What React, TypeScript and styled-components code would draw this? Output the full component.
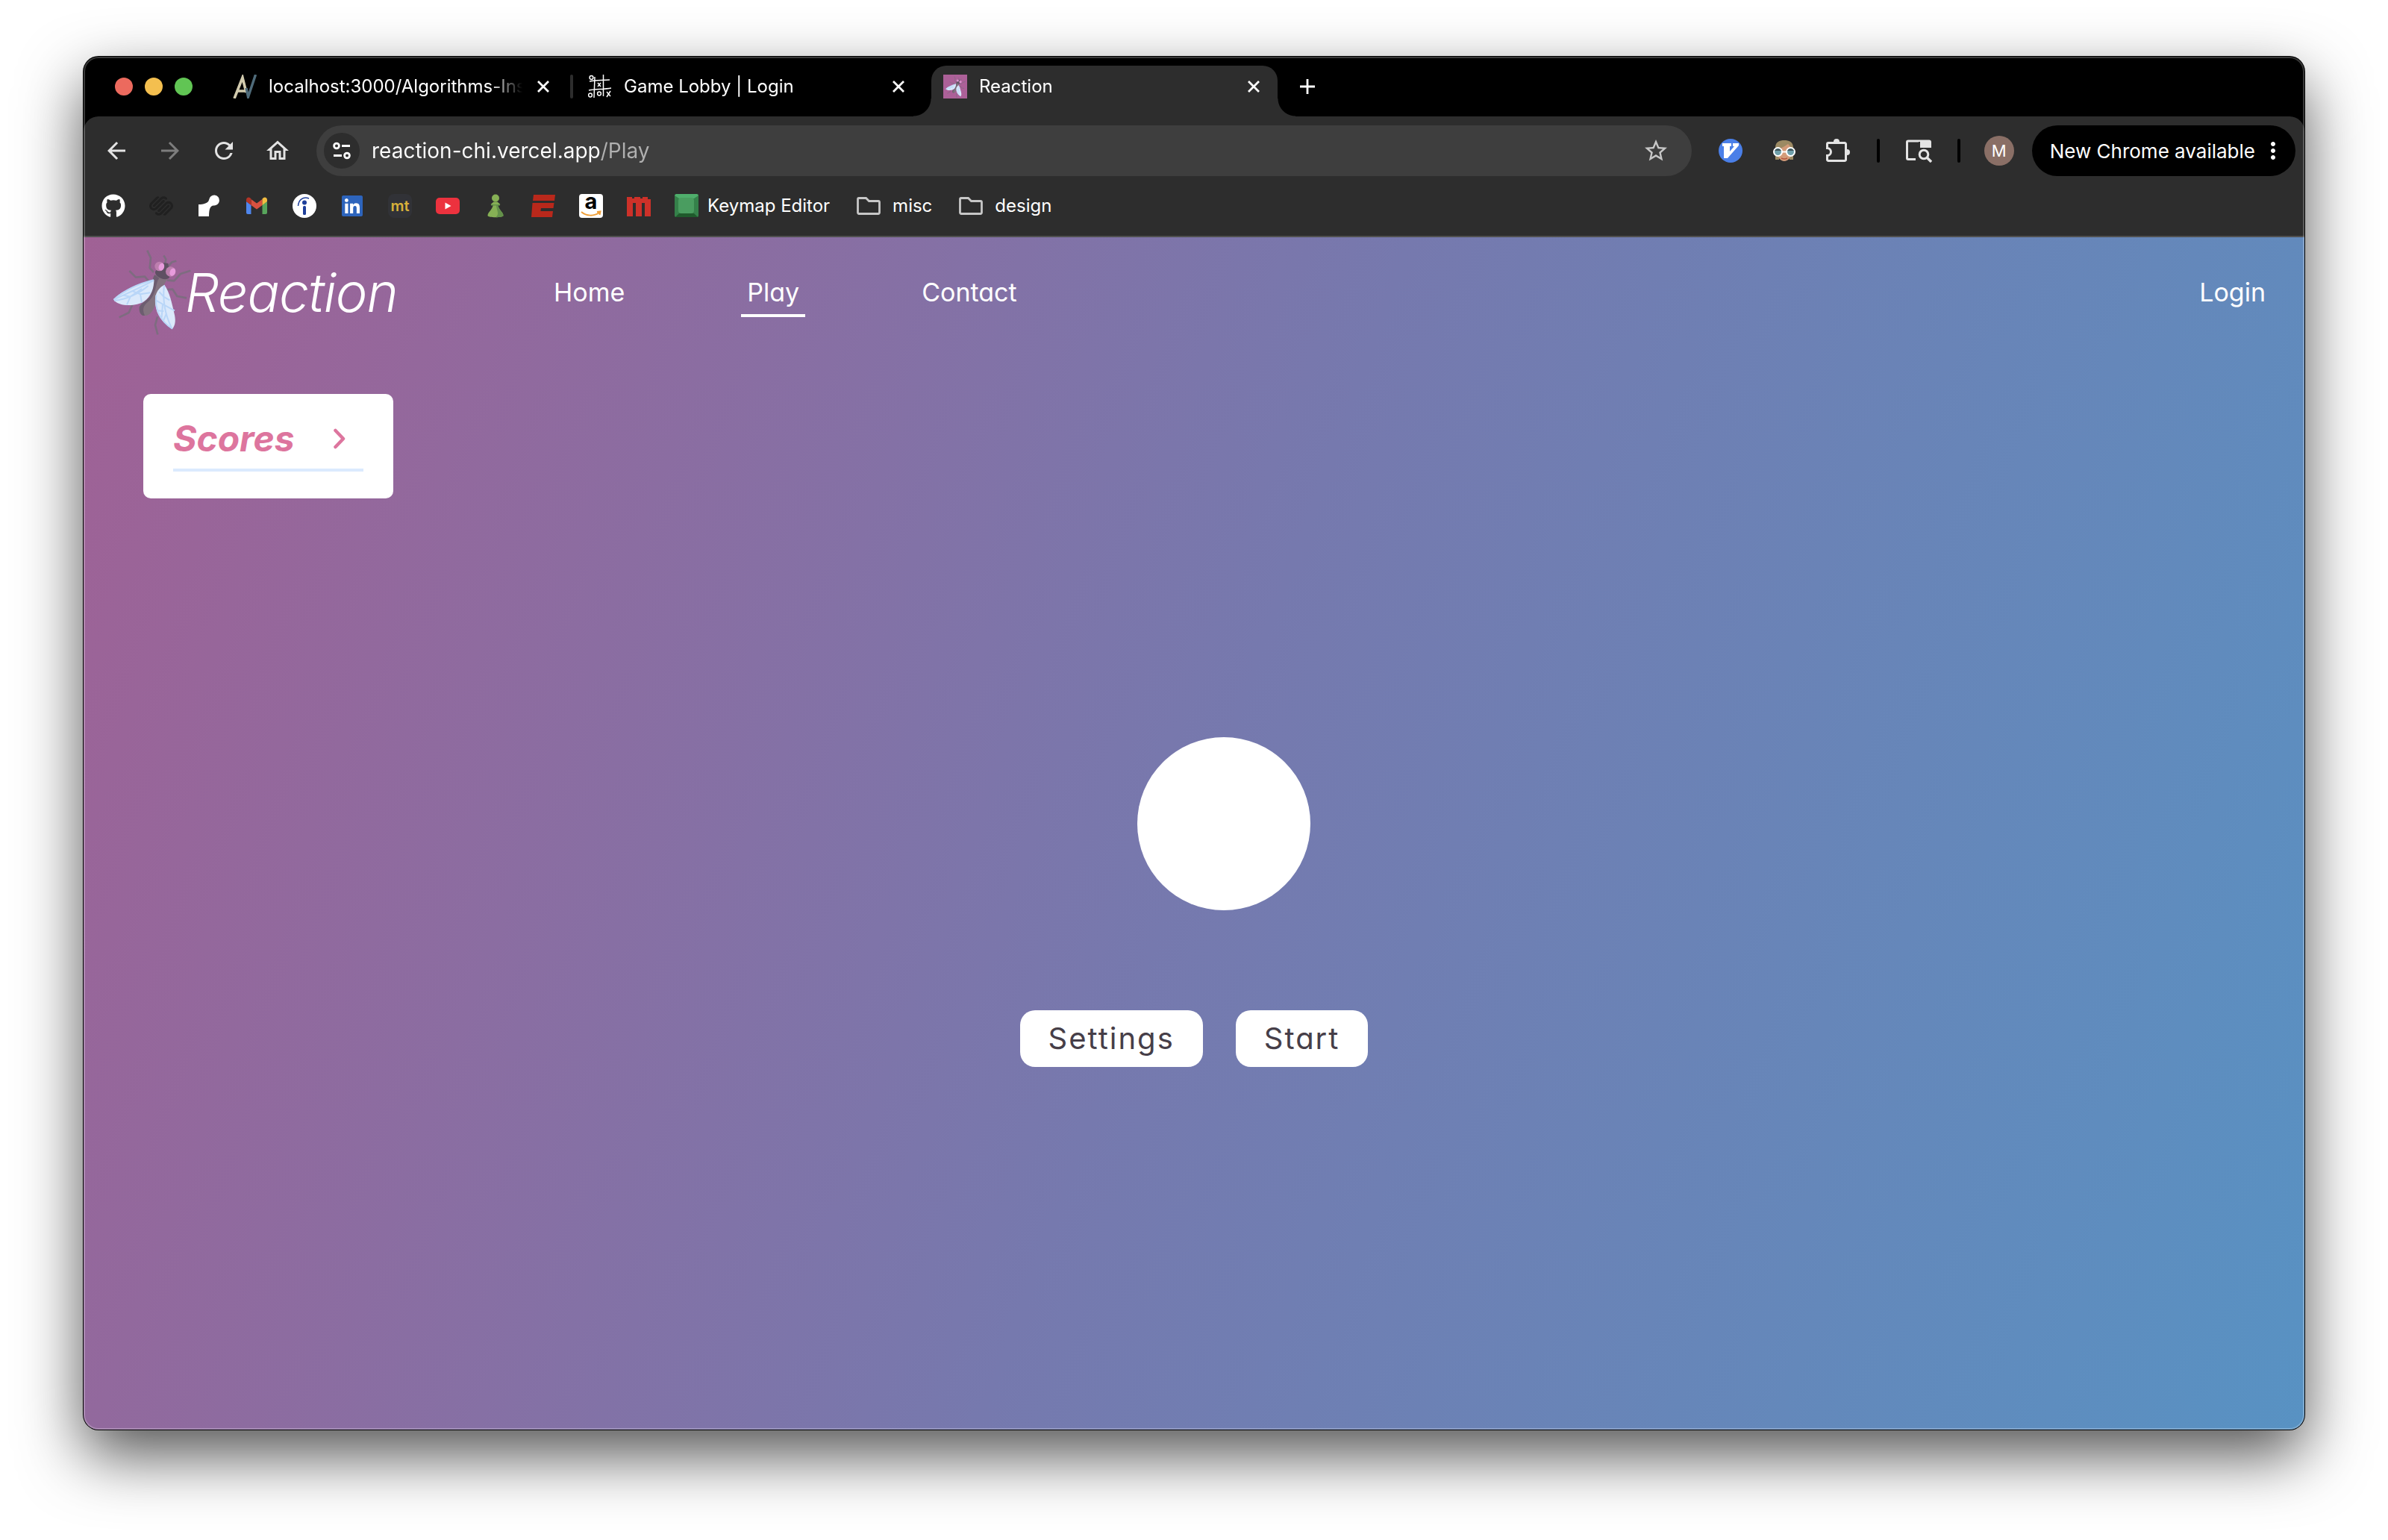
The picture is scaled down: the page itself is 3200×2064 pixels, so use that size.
import React from "react";
import styled, { createGlobalStyle, css } from "styled-components";
import { FaGithub, FaSquarespace, FaLinkedin } from "react-icons/fa";
import {
  MdArrowBack,
  MdArrowForward,
  MdRefresh,
  MdOutlineHome,
  MdStarBorder,
  MdMoreVert,
} from "react-icons/md";

const GlobalStyle = createGlobalStyle`
  *, *::before, *::after { box-sizing: border-box; }
  body {
    margin: 0;
    background: #fff;
    font-family: Inter, "Liberation Sans", sans-serif;
    -webkit-font-smoothing: antialiased;
  }
  button, input { font: inherit; color: inherit; border: 0; padding: 0; background: none; }
  button { cursor: pointer; }
  h1, h2, p, ul { margin: 0; padding: 0; }
  ul { list-style: none; }
  a { color: inherit; text-decoration: none; }
  svg { display: block; flex: none; }
`;

/* ---------- desktop and window ---------- */

const Desktop = styled.div`
  min-height: 100vh;
  padding: 76px 112px 148px;
  display: flex;
`;

const BrowserWindow = styled.div`
  position: relative;
  flex: 1;
  min-width: 0;
  display: flex;
  flex-direction: column;
  overflow: hidden;
  border-radius: 20px;
  background: #000;
  color: #fff;
  box-shadow: 0 0 0 1px #000, 0 34px 84px rgba(0, 0, 0, 0.68);

  &::after {
    content: "";
    position: absolute;
    inset: 0;
    border: 2px solid rgba(255, 255, 255, 0.22);
    border-radius: 20px;
    pointer-events: none;
  }
`;

/* ---------- tab strip ---------- */

const TabStrip = styled.div`
  display: flex;
  align-items: center;
  height: 80px;
  padding-left: 42px;
`;

const TrafficLights = styled.div`
  display: flex;
  gap: 16px;
  margin-right: 38px;
`;

const Light = styled.button<{ $color: string }>`
  width: 24px;
  height: 24px;
  border-radius: 50%;
  background: ${(p) => p.$color};
`;

const Tab = styled.div<{ $active?: boolean }>`
  position: relative;
  display: flex;
  align-items: center;
  align-self: flex-end;
  gap: 16px;
  width: 464px;
  height: 68px;
  padding: 0 16px 12px;
  ${(p) =>
    p.$active &&
    css`
      margin-left: 12px;
      background: #2d2d2d;
      border-radius: 20px 20px 0 0;

      &::before,
      &::after {
        content: "";
        position: absolute;
        bottom: 0;
        width: 24px;
        height: 24px;
      }
      &::before {
        right: 100%;
        background: radial-gradient(circle at 0 0, transparent 23px, #2d2d2d 24px);
      }
      &::after {
        left: 100%;
        background: radial-gradient(circle at 100% 0, transparent 23px, #2d2d2d 24px);
      }
    `}
`;

const TabTitle = styled.span`
  flex: 1;
  min-width: 0;
  margin-right: -12px;
  white-space: nowrap;
  font-size: 24px;
  line-height: 32px;
  mask-image: linear-gradient(90deg, #000 calc(100% - 52px), transparent calc(100% - 8px));
`;

const TabDivider = styled.span`
  width: 4px;
  height: 32px;
  margin: 0 4px;
  border-radius: 2px;
  background: #2d2d2d;
`;

const StripButton = styled.button`
  display: grid;
  place-items: center;
  width: 32px;
  height: 32px;
`;

const NewTabButton = styled(StripButton)`
  margin-left: 24px;
`;

/* ---------- toolbar ---------- */

const Chrome = styled.div`
  background: #2d2d2d;
  border-radius: 20px 20px 0 0;
  border-bottom: 2px solid #505050;
`;

const Toolbar = styled.div`
  display: flex;
  align-items: center;
  gap: 32px;
  padding: 12px 12px 12px 24px;
`;

const ToolButton = styled.button<{ $dim?: boolean }>`
  display: grid;
  place-items: center;
  flex: none;
  width: 40px;
  height: 40px;
  font-size: 36px;
  color: ${(p) => (p.$dim ? "#7d7d7d" : "#e3e3e3")};
`;

const AddressBar = styled.form`
  flex: 1;
  min-width: 0;
  display: flex;
  align-items: center;
  gap: 16px;
  height: 68px;
  padding: 0 28px 0 10px;
  border-radius: 34px;
  background: #3e3e3e;
`;

const SiteInfo = styled.button`
  display: grid;
  place-items: center;
  flex: none;
  width: 48px;
  height: 48px;
  border-radius: 50%;
  background: #2d2d2d;
`;

const AddressInput = styled.input`
  flex: 1;
  min-width: 0;
  height: 40px;
  font-size: 28px;
  outline: none;
  color: #fff;
  background: linear-gradient(90deg, #fff 308px, #b0b0b0 308px);
  background-clip: text;
  -webkit-background-clip: text;
  -webkit-text-fill-color: transparent;
`;

const ToolDivider = styled.span`
  flex: none;
  width: 4px;
  height: 32px;
  border-radius: 2px;
  background: #000;
`;

const Profile = styled.div`
  display: flex;
  align-items: center;
  gap: 24px;
`;

const Avatar = styled.button`
  width: 40px;
  height: 40px;
  border-radius: 50%;
  background: #8a6f66;
  font-size: 22px;
  line-height: 40px;
`;

const UpdateChip = styled.button`
  display: flex;
  align-items: center;
  gap: 6px;
  height: 68px;
  padding: 0 12px 0 24px;
  border-radius: 34px;
  background: #000;
  font-size: 26px;
  white-space: nowrap;
`;

/* ---------- bookmarks ---------- */

const Bookmarks = styled.nav`
  display: flex;
  align-items: center;
  gap: 32px;
  height: 68px;
  padding: 0 24px 12px;
`;

const Bookmark = styled.a`
  display: flex;
  align-items: center;
  gap: 12px;
  font-size: 24px;
  line-height: 32px;
  white-space: nowrap;
`;

const Folder = styled(Bookmark)`
  gap: 16px;
  margin-left: 4px;
`;

const Tile = styled.span<{ $bg: string; $fg: string }>`
  display: grid;
  place-items: center;
  width: 32px;
  height: 32px;
  border-radius: 8px;
  background: ${(p) => p.$bg};
  color: ${(p) => p.$fg};
  font-size: 20px;
  font-weight: 600;
  line-height: 24px;
`;

/* ---------- page ---------- */

const Page = styled.div`
  flex: 1;
  display: flex;
  flex-direction: column;
  background: linear-gradient(110deg, #a06195 0%, #7679ae 50%, #5892c3 100%);
  font-feature-settings: "cv11", "ss03";
`;

const SiteHeader = styled.header`
  display: flex;
  align-items: center;
  justify-content: space-between;
  height: 148px;
  padding: 0 44px 0 40px;
`;

const HeaderStart = styled.div`
  display: flex;
  align-items: center;
  gap: 144px;
`;

const Brand = styled.a`
  display: flex;
  align-items: center;
  width: 438px;
`;

const BrandName = styled.span`
  margin-left: -8px;
  font-size: 72px;
  font-style: italic;
  font-weight: 300;
  line-height: 80px;
  letter-spacing: -1px;
`;

const Links = styled.nav`
  display: flex;
  gap: 148px;
`;

const PageLink = styled.a<{ $current?: boolean }>`
  display: flex;
  align-items: center;
  height: 66px;
  padding: 0 8px;
  border: solid transparent;
  border-width: 4px 0;
  border-bottom-color: ${(p) => (p.$current ? "#fff" : "transparent")};
  font-size: 34px;
  line-height: 40px;
`;

const Main = styled.main`
  flex: 1;
  padding: 62px 80px 80px;
`;

const ScoresCard = styled.section`
  width: fit-content;
  padding: 20px 40px 36px;
  border-radius: 10px;
  background: #fff;
  color: #dd759e;
`;

const ScoresToggle = styled.button`
  display: flex;
  align-items: center;
  justify-content: space-between;
  gap: 44px;
  min-width: 255px;
  height: 84px;
  padding-right: 24px;
  border-bottom: 4px solid #dbeafe;
  font-size: 48px;
  font-style: italic;
  font-weight: 700;
  line-height: 56px;
`;

const Stage = styled.section`
  display: flex;
  flex-direction: column;
  align-items: center;
  gap: 134px;
  padding-top: 320px;
`;

const Target = styled.button`
  width: 232px;
  height: 232px;
  margin-left: 80px;
  border-radius: 50%;
  background: #fff;
`;

const Actions = styled.div`
  display: flex;
  gap: 44px;
`;

const ActionButton = styled.button`
  height: 76px;
  padding: 0 38px;
  border-radius: 20px;
  background: #fff;
  color: #463e48;
  font-size: 40px;
  line-height: 48px;
  letter-spacing: 2px;
`;

/* ---------- drawings ---------- */

const CloseIcon = () => (
  <svg width="16" height="16" viewBox="0 0 16 16" stroke="#fff" strokeWidth="2.8" aria-hidden>
    <path d="M1 1 15 15M15 1 1 15" />
  </svg>
);

const AlgoIcon = () => (
  <svg width="32" height="32" viewBox="0 0 32 32" fill="none" aria-hidden>
    <path d="M2 32 13 4 18 24M7 22h12" stroke="#d2cbae" strokeWidth="3.6" />
    <path d="M18 18 20.5 30 30.5 0" stroke="#4f6b7a" strokeWidth="3.4" />
  </svg>
);

const TicTacIcon = () => (
  <svg width="32" height="32" viewBox="0 0 32 32" fill="none" stroke="#fff" strokeWidth="1.5" aria-hidden>
    <path d="M9 3 8 31M20.500 0v29M2 9c9-2 17-1 27-2M1 21c10-2 20-1 30-3" />
    <circle cx="4.500" cy="4" r="2.400" />
    <circle cx="3" cy="27.500" r="2.400" />
    <circle cx="15" cy="25.500" r="2.400" />
    <path d="M13 11l4 5M17 11l-4 5M25 23l5 6M30 22l-5 8" />
  </svg>
);

const FlyDrawing = () => (
  <>
    <g fill="none" stroke="#7e6c80" strokeWidth="8" strokeLinejoin="round">
      <path d="M156 20 170 50 166 90 182 108" />
      <path d="M84 102 110 128 146 125 162 144" />
      <path d="M222 40 231 55 228 72M273 62 255 67 240 84" />
      <path d="M236 140 264 142 290 114 330 101" />
      <path d="M236 177 258 176 276 204 314 211" />
      <path d="M98 234 82 270 43 289" />
      <path d="M197 286 188 320 198 358" />
    </g>
    <path d="M186 118C170 140 184 170 166 206C150 226 122 236 124 254C124 272 134 284 150 282C178 278 190 240 196 200L238 134Z" fill="#83737f" />
    <path d="M186 118C170 140 184 170 166 206C150 226 122 236 124 254C124 272 134 284 146 282C132 250 146 238 164 222C196 190 188 150 204 132Z" fill="#6d5d70" />
    <path d="M222 70l18 2 4 30-28 4z" fill="#5f5063" />
    <ellipse cx="217" cy="116" rx="31" ry="17" transform="rotate(22 217 116)" fill="#5f5063" />
    <circle cx="205" cy="84" r="19" fill="#bd7fae" />
    <ellipse cx="213" cy="86" rx="11" ry="15" transform="rotate(20 213 86)" fill="#e79bdc" />
    <circle cx="250" cy="105" r="20" fill="#bd7fae" />
    <ellipse cx="258" cy="107" rx="11" ry="16" transform="rotate(20 258 107)" fill="#e79bdc" />
    <path d="M183 138C120 154 40 188 21 218C38 246 112 246 142 226C172 206 184 168 183 138Z" fill="#dbe9fb" />
    <path d="M225 158C190 176 178 214 196 268C210 304 236 324 257 335C268 322 271 304 266 280C254 226 246 190 225 158Z" fill="#dbe9fb" />
    <g fill="none" stroke="#b9d6f8" strokeWidth="6">
      <path d="M22 218C66 196 130 170 182 140M24 222C70 216 120 196 160 162M74 238 88 206 60 200M134 230 128 196 98 184M88 206 134 174M128 196 168 190" />
      <path d="M224 160C218 210 224 270 254 332M190 220 218 236 266 262M196 262 222 264M218 236 214 290M204 186 222 206 246 220M232 276 220 304" />
      <path d="M21 218C60 184 120 154 182 139M192 200C186 250 204 300 257 335" />
    </g>
  </>
);

const FlyLogo = () => (
  <svg width="104" height="114" viewBox="20 18 312 342" aria-hidden>
    <FlyDrawing />
  </svg>
);

const FlyFavicon = () => (
  <svg width="32" height="32" viewBox="-20 -10 380 380" aria-hidden>
    <rect x="-20" y="-10" width="380" height="380" fill="#ac6098" />
    <FlyDrawing />
  </svg>
);

const TuneIcon = () => (
  <svg width="28" height="28" viewBox="0 0 28 28" fill="none" stroke="#fff" strokeWidth="2.8" aria-hidden>
    <circle cx="7" cy="7.500" r="3.400" />
    <path d="M14 7.500h11M3 20.500h11" />
    <circle cx="21" cy="20.500" r="3.400" />
  </svg>
);

const VimiumIcon = () => (
  <svg width="32" height="32" viewBox="0 0 32 32" aria-hidden>
    <circle cx="16" cy="16" r="16" fill="#4a7fe8" />
    <path d="M5 6h12v4h-2v7l6-7h-2V6h8v3L12 26H7V10H5z" fill="#fff" />
  </svg>
);

const FaceIcon = () => (
  <svg width="32" height="32" viewBox="0 0 32 32" aria-hidden>
    <path d="M4 28V12C4 4 10 2 16 2s12 2 12 10v16h-5V12H9v16z" fill="#9c8a63" />
    <path d="M6 14C12 13 17 10 21 7c2 2 5 5 5 9 0 9-5 14-10 14S6 25 6 14z" fill="#d39b79" />
    <circle cx="7.500" cy="17.500" r="5.500" fill="#6fa0ab" stroke="#fff" strokeWidth="2" />
    <circle cx="24.500" cy="17.500" r="5.500" fill="#6fa0ab" stroke="#fff" strokeWidth="2" />
    <path d="M3 16a5 5 0 0 1 9 0zM20 16a5 5 0 0 1 9 0z" fill="#3d5157" />
    <path d="M13 17.500h6" stroke="#fff" strokeWidth="2" />
    <path d="M12 26q4 2 8 0" stroke="#b5563f" strokeWidth="1.500" fill="none" />
  </svg>
);

const PuzzleIcon = () => (
  <svg width="32" height="32" viewBox="0 0 32 32" aria-hidden>
    <path
      d="M3 5.500h22a1.500 1.500 0 0 1 1.500 1.500v21a1.500 1.500 0 0 1-1.500 1.500H3A1.500 1.500 0 0 1 1.500 28v-5.500a5 5 0 0 0 0-10V7A1.500 1.500 0 0 1 3 5.500z"
      fill="none"
      stroke="#e3e3e3"
      strokeWidth="3"
    />
    <path d="M10 4a4 4 0 0 1 8 0zM28 14a4 4 0 0 1 0 8z" fill="#e3e3e3" />
  </svg>
);

const TabSearchIcon = () => (
  <svg width="36" height="32" viewBox="0 0 36 32" aria-hidden>
    <path d="M14 27.500H4A1.500 1.500 0 0 1 2.500 26V4.500A1.500 1.500 0 0 1 4 3h14" fill="none" stroke="#e3e3e3" strokeWidth="3" />
    <path d="M18 1.500h14a3 3 0 0 1 3 3V12H20V4h-2z" fill="#e3e3e3" />
    <circle cx="25" cy="21" r="5.800" fill="none" stroke="#e3e3e3" strokeWidth="3" />
    <path d="M29 25l6 6" stroke="#e3e3e3" strokeWidth="3.400" />
  </svg>
);

const BlobIcon = () => (
  <svg width="32" height="32" viewBox="0 0 32 32" aria-hidden>
    <path d="M2 14C9 14 15 12 16 8A7 7 0 1 1 22 15.400C18 16 16 19 16 30H2z" fill="#fff" />
  </svg>
);

const GmailIcon = () => (
  <svg width="32" height="32" viewBox="0 0 32 32" aria-hidden>
    <path d="M2 10v15a2 2 0 0 0 2 2h4.500V14.500z" fill="#4f86ec" />
    <path d="M23.500 27H28a2 2 0 0 0 2-2V10l-6.500 4.500z" fill="#58a55c" />
    <path d="M8.500 7 16 12.500 23.500 7v8L16 20.500 8.500 15z" fill="#d85140" />
    <path d="M2 8c0-3 3-4.500 5.500-2.500l1 1V15L2 10z" fill="#b33426" />
    <path d="M30 8c0-3-3-4.500-5.500-2.500l-1 1V15L30 10z" fill="#f2bd42" />
  </svg>
);

const IndeedIcon = () => (
  <svg width="32" height="32" viewBox="0 0 32 32" aria-hidden>
    <circle cx="16" cy="16" r="16" fill="#fff" />
    <circle cx="16" cy="11.500" r="3" fill="#1f3f9a" />
    <rect x="14" y="16" width="4" height="12" rx="1.500" fill="#1f3f9a" />
    <path d="M7.500 16C8 8 14 3 22 6" fill="none" stroke="#1f3f9a" strokeWidth="1.500" />
  </svg>
);

const LinkedInIcon = styled(FaLinkedin)`
  width: 32px;
  height: 32px;
  color: #2d64bc;
  background: linear-gradient(#fff, #fff) center / 20px 20px no-repeat;
`;

const YouTubeIcon = () => (
  <svg width="32" height="32" viewBox="0 0 32 32" aria-hidden>
    <rect y="5" width="32" height="22" rx="5" fill="#ec323e" />
    <path d="M12.500 11.500v9l8-4.500z" fill="#fff" />
  </svg>
);

const PawnIcon = () => (
  <svg width="32" height="32" viewBox="0 0 32 32" aria-hidden>
    <path d="M5.500 29c0-5 6-7 7.500-15H9.500l4-3.500h5l4 3.500H19c1.500 8 7.500 10 7.500 15 0 3-21 3-21 0z" fill="#86b055" />
    <path d="M17 14h2c1.500 8 7.500 10 7.500 15 0 1.500-5 2.200-10 2.200C22 26 17 22 17 14z" fill="#63904a" />
    <circle cx="16" cy="5.500" r="5" fill="#86b055" />
    <path d="M10 14h12v1.500H10z" fill="#63904a" />
  </svg>
);

const SlantedBarsIcon = () => (
  <svg width="32" height="32" viewBox="0 0 32 32" fill="#b9281b" aria-hidden>
    <path d="M3 1h29l-1 8H2zM1.500 12h29l-1 7H13l-.6 4H29l-1 8H0z" />
  </svg>
);

const SmileTile = styled(Tile)`
  position: relative;
  border-radius: 4px;
  font-size: 29px;
  font-weight: 700;
  line-height: 20px;
  align-items: start;

  svg {
    position: absolute;
    left: 0;
    top: 0;
  }
`;

const AmazonIcon = () => (
  <SmileTile $bg="#fff" $fg="#000">
    a
    <svg width="32" height="32" viewBox="0 0 32 32" fill="none" stroke="#ef9f38" strokeWidth="2" aria-hidden>
      <path d="M3 24c7 6 17 6 24 1M24 24l4.500-.5-1 4.500" />
    </svg>
  </SmileTile>
);

const BlockMIcon = () => (
  <svg width="32" height="32" viewBox="0 0 32 32" fill="#cd3129" aria-hidden>
    <path d="M0 4h7v2h3V4h8v2h3V4h7v3h4v23h-8V12h-4v18h-8V12H8v18H0z" />
  </svg>
);

const KeycapIcon = () => (
  <svg width="32" height="32" viewBox="0 0 32 32" aria-hidden>
    <rect width="32" height="31" rx="2" fill="#35814a" />
    <path d="M0 2l6 4h20l6-4-2-2H2z" fill="#4fae6c" />
    <path d="M1 31l5-5h20l5 5z" fill="#1f5a2c" />
    <rect x="5" y="5" width="21" height="21" rx="4" fill="#4a9d60" />
  </svg>
);

const FolderIcon = () => (
  <svg width="32" height="32" viewBox="0 0 32 32" fill="none" stroke="#c7c7c7" strokeWidth="2.800" aria-hidden>
    <path d="M1.500 25V7A1.500 1.500 0 0 1 3 5.500h9.500l4 4H29a1.500 1.500 0 0 1 1.500 1.500v14a1.500 1.500 0 0 1-1.500 1.500H3A1.500 1.500 0 0 1 1.500 25z" />
  </svg>
);

const ChevronIcon = () => (
  <svg width="16" height="28" viewBox="0 0 16 28" fill="none" stroke="#dd759e" strokeWidth="4.500" strokeLinecap="round" strokeLinejoin="round" aria-hidden>
    <path d="M2.500 3 13 14 2.500 25" />
  </svg>
);

/* ---------- data ---------- */

const tabs = [
  { title: "localhost:3000/Algorithms-Ins", icon: <AlgoIcon /> },
  { title: "Game Lobby | Login", icon: <TicTacIcon /> },
  { title: "Reaction", icon: <FlyFavicon />, active: true },
];

const siteBookmarks = [
  { name: "GitHub", icon: <FaGithub size={32} /> },
  { name: "Squarespace", icon: <FaSquarespace size={32} color="#202020" /> },
  { name: "Notes", icon: <BlobIcon /> },
  { name: "Gmail", icon: <GmailIcon /> },
  { name: "Indeed", icon: <IndeedIcon /> },
  { name: "LinkedIn", icon: <LinkedInIcon /> },
  { name: "Typing", icon: <Tile $bg="#313237" $fg="#d8b13a">mt</Tile> },
  { name: "YouTube", icon: <YouTubeIcon /> },
  { name: "Chess", icon: <PawnIcon /> },
  { name: "Editor", icon: <SlantedBarsIcon /> },
  { name: "Amazon", icon: <AmazonIcon /> },
  { name: "Menu", icon: <BlockMIcon /> },
];

const pages = ["Home", "Play", "Contact"];

export default function App() {
  return (
    <>
      <GlobalStyle />
      <Desktop>
        <BrowserWindow>
          <TabStrip>
            <TrafficLights>
              <Light $color="#ec6a5e" aria-label="Close window" />
              <Light $color="#f4bf4f" aria-label="Minimise window" />
              <Light $color="#61c554" aria-label="Zoom window" />
            </TrafficLights>
            {tabs.map((tab, i) => (
              <React.Fragment key={tab.title}>
                {i === 1 && <TabDivider />}
                <Tab $active={tab.active}>
                  {tab.icon}
                  <TabTitle>{tab.title}</TabTitle>
                  <StripButton aria-label={`Close ${tab.title}`}>
                    <CloseIcon />
                  </StripButton>
                </Tab>
              </React.Fragment>
            ))}
            <NewTabButton aria-label="New tab">
              <svg width="20" height="20" viewBox="0 0 20 20" stroke="#fff" strokeWidth="2.8" aria-hidden>
                <path d="M10 0v20M0 10h20" />
              </svg>
            </NewTabButton>
          </TabStrip>

          <Chrome>
            <Toolbar>
              <ToolButton aria-label="Back"><MdArrowBack /></ToolButton>
              <ToolButton aria-label="Forward" $dim><MdArrowForward /></ToolButton>
              <ToolButton aria-label="Reload"><MdRefresh /></ToolButton>
              <ToolButton aria-label="Home page"><MdOutlineHome /></ToolButton>
              <AddressBar onSubmit={(e) => e.preventDefault()}>
                <SiteInfo type="button" aria-label="Site information"><TuneIcon /></SiteInfo>
                <AddressInput aria-label="Address" defaultValue="reaction-chi.vercel.app/Play" />
                <ToolButton type="button" aria-label="Bookmark this page"><MdStarBorder color="#c7c7c7" /></ToolButton>
              </AddressBar>
              <ToolButton aria-label="Vimium"><VimiumIcon /></ToolButton>
              <ToolButton aria-label="Reader"><FaceIcon /></ToolButton>
              <ToolButton aria-label="Extensions"><PuzzleIcon /></ToolButton>
              <ToolDivider />
              <ToolButton aria-label="Search tabs"><TabSearchIcon /></ToolButton>
              <ToolDivider />
              <Profile>
                <Avatar>M</Avatar>
                <UpdateChip>
                  New Chrome available
                  <MdMoreVert size={36} />
                </UpdateChip>
              </Profile>
            </Toolbar>
            <Bookmarks aria-label="Bookmarks">
              {siteBookmarks.map((b) => (
                <Bookmark key={b.name} href="#" aria-label={b.name}>{b.icon}</Bookmark>
              ))}
              <Bookmark href="#"><KeycapIcon />Keymap Editor</Bookmark>
              <Folder href="#"><FolderIcon />misc</Folder>
              <Folder href="#"><FolderIcon />design</Folder>
            </Bookmarks>
          </Chrome>

          <Page>
            <SiteHeader>
              <HeaderStart>
                <Brand href="#">
                  <FlyLogo />
                  <BrandName>Reaction</BrandName>
                </Brand>
                <Links aria-label="Pages">
                  {pages.map((p) => (
                    <PageLink key={p} href="#" $current={p === "Play"}>{p}</PageLink>
                  ))}
                </Links>
              </HeaderStart>
              <PageLink href="#">Login</PageLink>
            </SiteHeader>
            <Main>
              <ScoresCard>
                <ScoresToggle aria-expanded={false}>
                  Scores
                  <ChevronIcon />
                </ScoresToggle>
              </ScoresCard>
              <Stage>
                <Target aria-label="Target" />
                <Actions>
                  <ActionButton>Settings</ActionButton>
                  <ActionButton>Start</ActionButton>
                </Actions>
              </Stage>
            </Main>
          </Page>
        </BrowserWindow>
      </Desktop>
    </>
  );
}
